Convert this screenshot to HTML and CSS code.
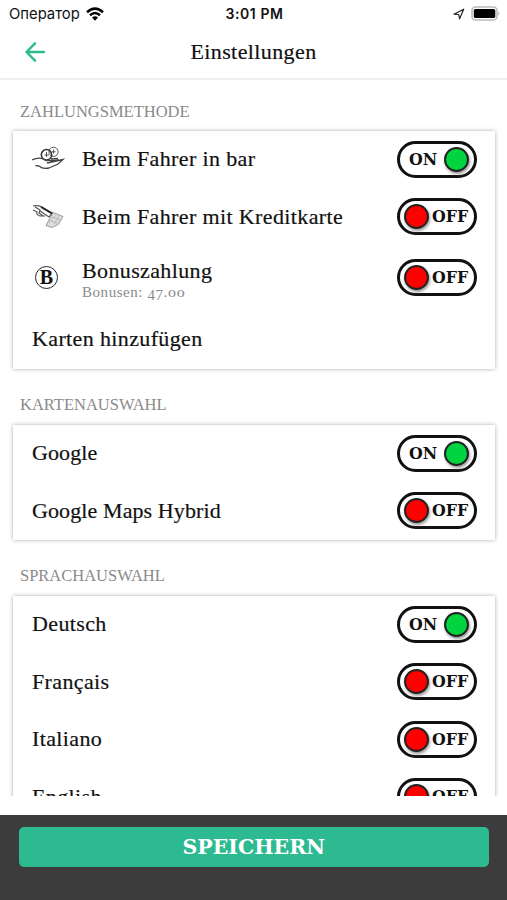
FILE: index.html
```html
<!DOCTYPE html>
<html lang="de">
<head>
<meta charset="utf-8">
<title>Einstellungen</title>
<link rel="stylesheet" href="styles.css">
</head>
<body>
<div class="status">
  <div class="carrier"><span>Оператор</span>
    <svg width="20" height="16" viewBox="0 0 20 16"><path d="M2 6.2Q10-1 18 6.2M5 9.3Q10 4.8 15 9.3" fill="none" stroke="#000" stroke-width="2.5"/><path d="M7 11.6Q10 9 13 11.6L10 14.7Z"/></svg>
  </div>
  <div class="time">3:01 PM</div>
  <div class="indicators">
    <svg width="12" height="12" viewBox="0 0 12 12"><path d="M1 6.2 10.7 1.2 6.6 10.8 5.7 6.5Z" fill="none" stroke="#222" stroke-width="1.2" stroke-linejoin="round"/></svg>
    <svg width="29" height="15" viewBox="0 0 29 15"><rect x="1" y="1" width="25" height="13" rx="3.6" fill="#fff" stroke="#bbb" stroke-width="1.6"/><rect x="2.8" y="3" width="21.5" height="9" rx="1.6"/><path d="M27.3 5.2q2.2 2.3 0 4.6Z" fill="#aaa"/></svg>
  </div>
</div>
<header class="navbar">
  <svg class="back" width="20" height="20" viewBox="0 0 20 20"><path d="M19 10H2M10 1.3 1.5 10 10 18.7" fill="none" stroke="#2dba91" stroke-width="2.4" stroke-linecap="round" stroke-linejoin="round"/></svg>
  <h1>Einstellungen</h1>
</header>
<main>
  <h2>ZAHLUNGSMETHODE</h2>
  <section class="card">
    <div class="row">
      <svg class="icon" width="34" height="28" viewBox="0 0 34 28" fill="none" stroke="#555" stroke-width="1"><circle cx="21.5" cy="6.8" r="4.6"/><circle cx="14.5" cy="9.8" r="5.2" stroke="#333" stroke-width="1.5"/><path d="M19.5 6.8h4M21.5 4.5v4M12.5 10h4.5M14.5 7v5"/><path d="M0 15Q8 11 14 15.5L25 15.7M15 18 31 14.5 26 19 17 23Q11 24.5 7 21L3.5 20.5M19 14l7-.5M18 16.5l9-1.5" stroke="#444" stroke-width="1.3"/></svg>
      <span class="label">Beim Fahrer in bar</span>
      <span class="toggle on"><b>ON</b><i></i></span>
    </div>
    <div class="row">
      <svg class="icon" width="34" height="28" viewBox="0 0 34 28" fill="none" stroke="#777" stroke-width="1"><path d="M21 9.5 31 13.5 26 21.5 20 24.5 14 22.5Z" fill="#ddd" stroke="#999"/><path d="M17 20 24 12M22 21 27 13M16 17l12 4M20 14l10 3" stroke="#bbb"/><path d="M1 3Q6 2 10 4L20 10 17 14 8 8M1 7 5 9Q4 12 8 13H13M3 4 8 7 7 10 11 13" stroke="#555" stroke-width="1.2"/><path d="M9 4 20 10.5" stroke="#222" stroke-width="1.7"/></svg>
      <span class="label">Beim Fahrer mit Kreditkarte</span>
      <span class="toggle"><i></i><b>OFF</b></span>
    </div>
    <div class="row bonus">
      <span class="icon"><b class="coin">B</b></span>
      <span class="label">Bonuszahlung<small>Bonusen: <span class="deep">47</span>.<span class="zeros">00</span></small></span>
      <span class="toggle"><i></i><b>OFF</b></span>
    </div>
    <div class="row add"><span class="label">Karten hinzufügen</span></div>
  </section>
  <h2>KARTENAUSWAHL</h2>
  <section class="card maps">
    <div class="row"><span class="label">Google</span><span class="toggle on"><b>ON</b><i></i></span></div>
    <div class="row"><span class="label">Google Maps Hybrid</span><span class="toggle"><i></i><b>OFF</b></span></div>
  </section>
  <h2>SPRACHAUSWAHL</h2>
  <section class="card">
    <div class="row"><span class="label">Deutsch</span><span class="toggle on"><b>ON</b><i></i></span></div>
    <div class="row"><span class="label">Français</span><span class="toggle"><i></i><b>OFF</b></span></div>
    <div class="row"><span class="label">Italiano</span><span class="toggle"><i></i><b>OFF</b></span></div>
    <div class="row"><span class="label">English</span><span class="toggle"><i></i><b>OFF</b></span></div>
  </section>
</main>
<footer><button>SPEICHERN</button></footer>
</body>
</html>
```
FILE: styles.css
```css
* { box-sizing: border-box; }
body {
  margin: 0;
  height: 900px;
  display: flex;
  flex-direction: column;
  overflow: hidden;
  background: #fff;
  color: #111;
  font-family: Georgia, "Liberation Serif", serif;
}
.status {
  height: 27px;
  flex: none;
  display: grid;
  grid-template-columns: 1fr auto 1fr;
  align-items: center;
  padding: 0 7px 0 9px;
  font: 14.8px Inter, sans-serif;
}
.carrier, .indicators { display: flex; align-items: center; }
.carrier { gap: 5px; }
.indicators { justify-content: flex-end; gap: 6px; }
.time { font-weight: 600; font-size: 14px; letter-spacing: .6px; }
.navbar {
  height: 53px;
  flex: none;
  display: grid;
  grid-template-columns: 60px 1fr 60px;
  align-items: center;
  padding-bottom: 1px;
  border-bottom: 2px solid #eee;
}
.back { margin-left: 25px; }
h1 {
  margin: 0;
  text-align: center;
  font-size: 22px;
  line-height: 24px;
  font-weight: 400;
  letter-spacing: .4px;
  -webkit-text-stroke: .2px #111;
}
main { height: 716px; flex: none; overflow: hidden; padding: 0 12px; }
h2 {
  margin: 0;
  height: 55.5px;
  padding: 27px 8px 0;
  font-size: 16.5px;
  line-height: 18px;
  font-weight: 400;
  color: #8a8a8a;
}
main > h2:first-child { height: 51px; padding-top: 23px; }
.card {
  margin-left: 1px;
  width: 482px;
  background: #fff;
  box-shadow: 0 0 4px #aaa;
}
.row {
  height: 57.5px;
  display: flex;
  align-items: center;
  padding: 0 18px 1px 19px;
}
.card + h2 + .card .row:first-child { height: 58px; }
.bonus { height: 63px; }
.add { height: 60px; }
.icon { width: 34px; flex: none; margin-right: 16px; display: flex; justify-content: center; }
.coin {
  width: 23px;
  height: 23px;
  margin-right: 5px;
  border: 1.5px solid #222;
  border-radius: 50%;
  font-size: 20px;
  line-height: 20px;
  text-align: center;
}
.label {
  flex: 1;
  font-size: 22px;
  line-height: 24px;
  letter-spacing: .37px;
  white-space: nowrap;
  -webkit-text-stroke: .2px #111;
}
.maps .label { letter-spacing: .1px; }
.bonus .label { padding-top: 7px; }
.label small {
  display: block;
  font-size: 15px;
  line-height: 18px;
  letter-spacing: .55px;
  color: #8a8a8a;
  -webkit-text-stroke: 0;
}
.deep { display: inline-block; line-height: 14px; vertical-align: -3px; }
.zeros { display: inline-block; font-size: 10px; letter-spacing: .5px; line-height: 10px; transform: scaleX(1.6); transform-origin: left; }
.toggle {
  width: 80px;
  height: 37px;
  flex: none;
  display: flex;
  align-items: center;
  padding-left: 4px;
  border: 3px solid #111;
  border-radius: 19px;
}
.toggle b {
  margin-left: 3px;
  font: bold 15.8px "DejaVu Serif", serif;
}
.toggle i {
  width: 25px;
  height: 25px;
  flex: none;
  border: 2px solid #222;
  border-radius: 50%;
  background: #f00;
  box-shadow: 1px 2px 3px #999;
}
.toggle.on { padding: 0 5px 0 9px; justify-content: space-between; }
.toggle.on b { margin: 0; }
.toggle.on i { background: #00d43e; }
footer {
  margin-top: auto;
  height: 85.5px;
  flex: none;
  padding: 12px 18.5px 0 19px;
  background: #3b3c3b;
}
button {
  width: 100%;
  height: 40px;
  padding: 0;
  border: 0;
  border-radius: 5px;
  background: #2dba91;
  color: #fff;
  font: bold 20.5px/40px "DejaVu Serif", serif;
}
```
